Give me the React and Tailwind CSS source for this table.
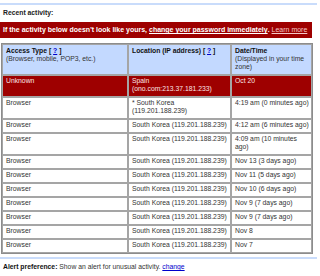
const rows = [
  { type: "Browser", loc: ["* South Korea", "(119.201.188.239)"], time: ["4:19 am (0 minutes ago)"] },
  { type: "Browser", loc: ["South Korea (119.201.188.239)"], time: ["4:12 am (6 minutes ago)"] },
  { type: "Browser", loc: ["South Korea (119.201.188.239)"], time: ["4:09 am (10 minutes", "ago)"] },
  { type: "Browser", loc: ["South Korea (119.201.188.239)"], time: ["Nov 13 (3 days ago)"] },
  { type: "Browser", loc: ["South Korea (119.201.188.239)"], time: ["Nov 11 (5 days ago)"] },
  { type: "Browser", loc: ["South Korea (119.201.188.239)"], time: ["Nov 10 (6 days ago)"] },
  { type: "Browser", loc: ["South Korea (119.201.188.239)"], time: ["Nov 9 (7 days ago)"] },
  { type: "Browser", loc: ["South Korea (119.201.188.239)"], time: ["Nov 9 (7 days ago)"] },
  { type: "Browser", loc: ["South Korea (119.201.188.239)"], time: ["Nov 8"] },
  { type: "Browser", loc: ["South Korea (119.201.188.239)"], time: ["Nov 7"] },
];

const Lines = ({ lines }) =>
  lines.map((l, i) => (
    <span key={i}>
      {i > 0 && <br />}
      {l}
    </span>
  ));

const cell = "border border-[#a5a5a5] px-[3px] pt-[1px] pb-[3px] align-top whitespace-nowrap";

export default function App() {
  return (
    <div
      className="w-[320px] h-[276px] bg-white text-[#333] text-[6.8px] leading-[8px] overflow-hidden"
      style={{ fontFamily: '"Liberation Sans", Arial, sans-serif' }}
    >
      <div className="pt-[3px]">
        <div className="w-[317px] h-[2px] bg-[#c9dcfb]" />
      </div>
      <div className="px-[3px] pt-[4px] pb-[5px] font-bold text-[#222]">Recent activity:</div>
      <div className="w-[312px] h-[16px] bg-[#9e0000] text-white text-[7px] px-[3px] flex items-center whitespace-nowrap">
        <span className="font-bold">If the activity below doesn't look like yours,&nbsp;</span>
        <a href="#" className="underline font-bold">change your password immediately</a>
        <span className="font-bold">.&nbsp;</span>
        <a href="#" className="underline text-[#f5c8c8]">Learn more</a>
      </div>
      <table className="mt-[5px] ml-[1px] w-[312px] border border-[#8c8c8c] border-separate border-spacing-0 table-fixed">
        <colgroup>
          <col className="w-[126px]" />
          <col className="w-[103px]" />
          <col />
        </colgroup>
        <thead>
          <tr className="bg-[#c3d9ff] text-left">
            <th className={cell + " font-normal pt-[2px]"}>
              <span className="font-bold text-[#111]">
                Access Type [ <a href="#" className="underline text-[#0000cc]">?</a> ]
              </span>
              <br />
              (Browser, mobile, POP3, etc.)
            </th>
            <th className={cell + " font-bold text-[#111] pt-[2px]"}>
              Location (IP address) [ <a href="#" className="underline text-[#0000cc]">?</a> ]
            </th>
            <th className={cell + " font-normal pt-[2px]"}>
              <span className="font-bold text-[#111]">Date/Time</span>
              <br />
              (Displayed in your time
              <br />
              zone)
            </th>
          </tr>
        </thead>
        <tbody>
          <tr className="bg-[#9e0000] text-[#fbe4e4]">
            <td className={cell}>Unknown</td>
            <td className={cell}>
              Spain
              <br />
              (ono.com:213.37.181.233)
            </td>
            <td className={cell}>Oct 20</td>
          </tr>
          {rows.map((r, i) => (
            <tr key={i}>
              <td className={cell}>{r.type}</td>
              <td className={cell}>
                <Lines lines={r.loc} />
              </td>
              <td className={cell}>
                <Lines lines={r.time} />
              </td>
            </tr>
          ))}
        </tbody>
      </table>
      <div className="pt-[3px]">
        <div className="w-[317px] h-[2px] bg-[#c9dcfb]" />
      </div>
      <div className="px-[3px] pt-[4px]">
        <span className="font-bold text-[#111]">Alert preference:</span> Show an alert for unusual activity.{" "}
        <a href="#" className="underline text-[#0000cc]">change</a>
      </div>
    </div>
  );
}
